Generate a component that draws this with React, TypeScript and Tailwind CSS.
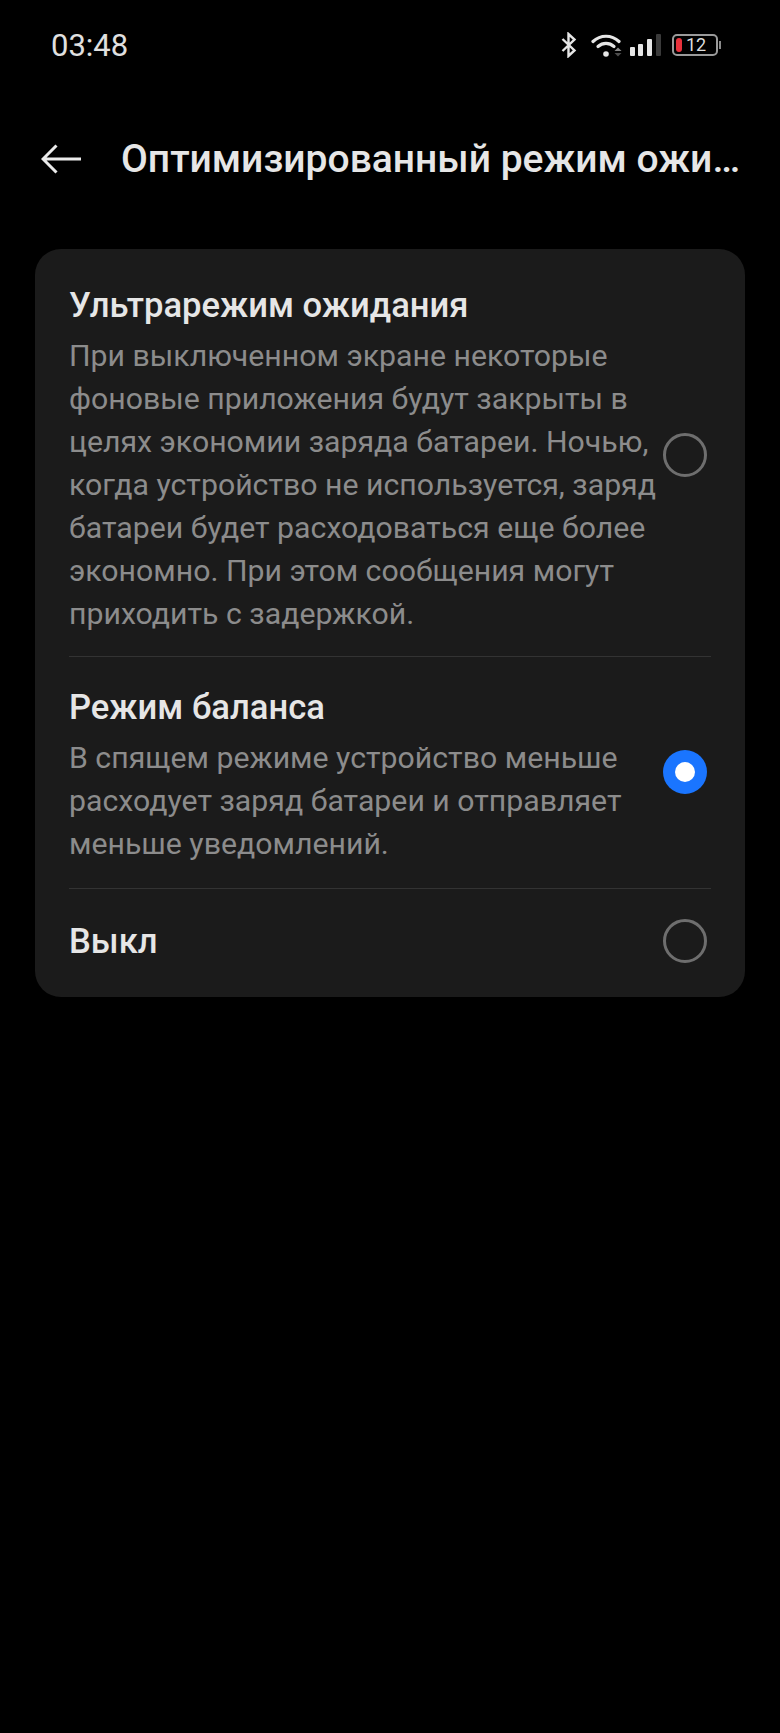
import React from 'react'

const font = { fontFamily: 'Roboto, "Noto Sans", sans-serif' }

const Bluetooth = () => (
  <svg width="16" height="26" viewBox="0 0 16 26" fill="none" stroke="#e6e6e6" strokeWidth="2.4">
    <path d="M1.5 7 L13.5 18.5 L7.5 24 V2 L13.5 7.5 L1.5 19" />
  </svg>
)

const Wifi = () => (
  <svg width="32" height="26" viewBox="0 0 32 26" fill="none">
    <path d="M2 9.5 C9.5 2.5 20.5 2.5 28 9.5" stroke="#e6e6e6" strokeWidth="3.2" strokeLinecap="round" />
    <path d="M7 14.5 C11.8 10.4 18.2 10.4 23 14.5" stroke="#e6e6e6" strokeWidth="3.2" strokeLinecap="round" />
    <circle cx="15" cy="22" r="2.8" fill="#e6e6e6" />
    <path d="M23.5 19 L27 15.5 L30.5 19 Z" fill="#8a8a8a" />
    <path d="M23.5 21 L27 24.5 L30.5 21 Z" fill="#4d4d4d" />
  </svg>
)

const Signal = () => (
  <svg width="31" height="23" viewBox="0 0 31 23">
    <rect x="0" y="13" width="5" height="9" rx="1" fill="#e6e6e6" />
    <rect x="8" y="10" width="5" height="12" rx="1" fill="#e6e6e6" />
    <rect x="17" y="5" width="5" height="17" rx="1" fill="#e6e6e6" />
    <rect x="26" y="0" width="5" height="22" rx="1" fill="#3a3a3a" />
  </svg>
)

const Battery = () => (
  <div className="flex items-center">
    <div className="flex items-center w-[46px] h-[22px] rounded-[5px] border-2 border-[#9a9a9a] pl-[2px]">
      <div className="w-[6px] h-[14px] rounded-[3px] bg-[#e8323c]" />
      <span className="ml-[4px] text-[18px] leading-none text-[#dddddd]">12</span>
    </div>
    <div className="w-[2px] h-[8px] ml-[1px] bg-[#8a8a8a]" />
  </div>
)

const Radio = ({ checked, className }: { checked?: boolean; className: string }) =>
  checked ? (
    <div className={`flex items-center justify-center shrink-0 w-[44px] h-[44px] mr-[4px] rounded-full bg-[#1a75ff] ${className}`}>
      <div className="w-[20px] h-[20px] rounded-full bg-white" />
    </div>
  ) : (
    <div className={`shrink-0 w-[44px] h-[44px] mr-[4px] rounded-full border-[3px] border-[#6e6e6e] ${className}`} />
  )

const Option = ({
  title,
  lines,
  checked,
  className,
  radioClassName,
}: {
  title: string
  lines?: string[]
  checked?: boolean
  className: string
  radioClassName: string
}) => (
  <div className="flex items-center justify-between">
    <div className={className}>
      <div className="text-[34.6px] leading-[40px] font-medium text-[#e6e6e6]">{title}</div>
      {lines && (
        <div className="mt-[9px] text-[30.25px] leading-[43px] text-[#8c8c8c]">
          {lines.map((l) => (
            <div key={l} className="whitespace-nowrap">{l}</div>
          ))}
        </div>
      )}
    </div>
    <Radio checked={checked} className={radioClassName} />
  </div>
)

export default function App() {
  return (
    <div className="w-[780px] h-[1733px] bg-black overflow-hidden" style={font}>
      <div className="flex items-center justify-between h-[36px] mt-[27px] pl-[51px] pr-[59px]">
        <span className="text-[31px] leading-none text-[#e0e0e0]">03:48</span>
        <div className="flex items-center">
          <Bluetooth />
          <div className="ml-[14px]"><Wifi /></div>
          <div className="ml-[7px]"><Signal /></div>
          <div className="ml-[11px]"><Battery /></div>
        </div>
      </div>

      <div className="flex items-center h-[50px] mt-[71px] pl-[41px] pr-[38px]">
        <svg className="shrink-0" width="40" height="30" viewBox="0 0 40 30" fill="none" stroke="#ebebeb" strokeWidth="3">
          <path d="M40 15 H2 M15.5 1.5 L2 15 L15.5 28.5" />
        </svg>
        <h1 className="ml-[40px] truncate text-[39px] leading-[50px] font-medium text-[#e6e6e6]">
          Оптимизированный режим ожидания
        </h1>
      </div>

      <div className="mx-[35px] mt-[65px] rounded-[26px] bg-[#1b1b1b] pl-[34px] pr-[34px]">
        <Option
          title="Ультрарежим ожидания"
          className="pt-[36px] pb-[21px]"
          radioClassName="mt-[5px]"
          lines={[
            'При выключенном экране некоторые',
            'фоновые приложения будут закрыты в',
            'целях экономии заряда батареи. Ночью,',
            'когда устройство не используется, заряд',
            'батареи будет расходоваться еще более',
            'экономно. При этом сообщения могут',
            'приходить с задержкой.',
          ]}
        />
        <div className="h-px bg-[#333333]" />
        <Option
          title="Режим баланса"
          checked
          className="pt-[30px] pb-[23px]"
          radioClassName="mb-[2px]"
          lines={[
            'В спящем режиме устройство меньше',
            'расходует заряд батареи и отправляет',
            'меньше уведомлений.',
          ]}
        />
        <div className="h-px bg-[#333333]" />
        <Option title="Выкл" className="pt-[32px] pb-[36px]" radioClassName="mb-[4px]" />
      </div>
    </div>
  )
}
